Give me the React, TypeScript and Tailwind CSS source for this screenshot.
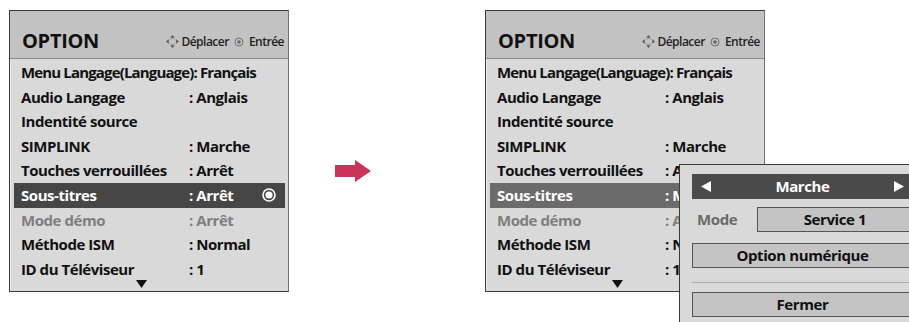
import React from 'react';

type Row = { label: string; value?: string; dim?: boolean; active?: boolean; tight?: boolean };

const rows: Row[] = [
  { label: 'Menu Langage(Language): Français', tight: true },
  { label: 'Audio Langage', value: ': Anglais' },
  { label: 'Indentité source' },
  { label: 'SIMPLINK', value: ': Marche' },
  { label: 'Touches verrouillées', value: ': Arrêt' },
  { label: 'Sous-titres', value: ': Arrêt', active: true },
  { label: 'Mode démo', value: ': Arrêt', dim: true },
  { label: 'Méthode ISM', value: ': Normal' },
  { label: 'ID du Téléviseur', value: ': 1' },
];

const font = { fontFamily: '"Open Sans", "Noto Sans", sans-serif' };

function MoveIcon() {
  return (
    <svg width="15" height="15" viewBox="0 0 14 14" className="mr-[1px]">
      <path d="M7 1 L9 3.5 H5 Z" fill="#555" />
      <path d="M7 13 L9 10.5 H5 Z" fill="#555" />
      <path d="M1 7 L3.5 5 V9 Z" fill="#555" />
      <path d="M13 7 L10.5 5 V9 Z" fill="#555" />
      <path d="M4.5 5 Q7 3.5 9.5 5 M4.5 9 Q7 10.5 9.5 9" stroke="#999" fill="none" strokeWidth="0.8" />
    </svg>
  );
}

function OkIcon() {
  return (
    <svg width="10" height="10" viewBox="0 0 10 10" className="mx-[5px]">
      <circle cx="5" cy="5" r="4" stroke="#666" strokeWidth="0.9" fill="none" />
      <circle cx="5" cy="5" r="1.8" fill="#666" />
    </svg>
  );
}

function Panel({ variant }: { variant: 'left' | 'right' }) {
  const right = variant === 'right';
  return (
    <div className="w-[280px] h-[282px] border border-[#3a3a3a] border-r-[#707070] flex flex-col bg-[#d9d9d9]" style={font}>
      <div className="h-[48px] bg-[#c2c2c2] border-b border-[#8c8c8c] flex items-end justify-between pl-[12px] pr-[4px] pb-[7px]">
        <span className="text-[20px] font-bold text-[#111] leading-none tracking-[-0.3px]">OPTION</span>
        <span className="flex items-center text-[12px] font-semibold text-[#222] leading-none tracking-[-0.5px] pb-[2px]">
          <MoveIcon />
          Déplacer
          <OkIcon />
          Entrée
        </span>
      </div>
      <div className="relative flex-1 pt-[1px] px-[3px] border-l border-[#f0f0f0]">
        {rows.map((r) => {
          const text = r.active ? 'text-white' : r.dim ? 'text-[#7e7e7e]' : 'text-[#111]';
          const bg = r.active ? (right ? 'bg-[#6b6b6b]' : 'bg-[#464646]') : '';
          const track = r.tight ? 'tracking-[-0.85px]' : 'tracking-[-0.45px]';
          return (
            <div key={r.label} className={`h-[24.6px] flex items-center pl-[7px] text-[15px] font-bold whitespace-nowrap ${track} ${text} ${bg}`}>
              <span className="w-[168px]">{r.label}</span>
              {r.value && <span>{right && r.label === 'Sous-titres' ? ': Marche' : r.value}</span>}
              {r.active && !right && (
                <svg width="14" height="14" viewBox="0 0 14 14" className="ml-auto mr-[9px]">
                  <circle cx="7" cy="7" r="6" stroke="#fff" strokeWidth="1.6" fill="none" />
                  <circle cx="7" cy="7" r="3.6" fill="#fff" />
                </svg>
              )}
            </div>
          );
        })}
        <svg width="11" height="8" viewBox="0 0 11 8" className="absolute left-[125px] bottom-[3px]">
          <path d="M0 0 H11 L5.5 8 Z" fill="#111" />
        </svg>
      </div>
    </div>
  );
}

function Popup() {
  const box = 'h-[25px] bg-[#c4c4c4] border border-[#555] flex items-center justify-center text-[15px] font-bold text-[#111] tracking-[-0.4px]';
  return (
    <div className="absolute left-[679px] top-[164px] w-[240px] h-[170px] bg-[#d9d9d9] border border-[#3a3a3a] pt-[9px] pl-[12px] pr-[5px]" style={font}>
      <div className="h-[25px] bg-[#4a4a4a] flex items-center justify-between px-[9px] text-white text-[15px] font-bold tracking-[-0.4px]">
        <svg width="10" height="11" viewBox="0 0 10 11"><path d="M0 5.5 L10 0 V11 Z" fill="#fff" /></svg>
        <span>Marche</span>
        <svg width="10" height="11" viewBox="0 0 10 11"><path d="M10 5.5 L0 0 V11 Z" fill="#fff" /></svg>
      </div>
      <div className="flex items-center mt-[8px]">
        <span className="w-[65px] pl-[5px] text-[15px] font-bold text-[#6a6a6a] tracking-[-0.4px]">Mode</span>
        <div className={`${box} flex-1`}>Service 1</div>
      </div>
      <div className={`${box} mt-[11px]`}>Option numérique</div>
      <div className="h-[1px] bg-[#aaa] mt-[14px]" />
      <div className={`${box} mt-[9px]`}>Fermer</div>
    </div>
  );
}

export default function App() {
  return (
    <div className="relative w-[909px] h-[322px] overflow-hidden bg-white">
      <div className="flex items-start pt-[10px] pl-[9px]">
        <Panel variant="left" />
        <div className="w-[196px] h-[282px] flex items-center pl-[46px]">
          <svg width="36" height="22" viewBox="0 0 36 22" className="mt-[40px]">
            <path d="M0 5 H20 V0 L36 11 L20 22 V17 H0 Z" fill="#cb3358" />
          </svg>
        </div>
        <Panel variant="right" />
      </div>
      <Popup />
    </div>
  );
}
